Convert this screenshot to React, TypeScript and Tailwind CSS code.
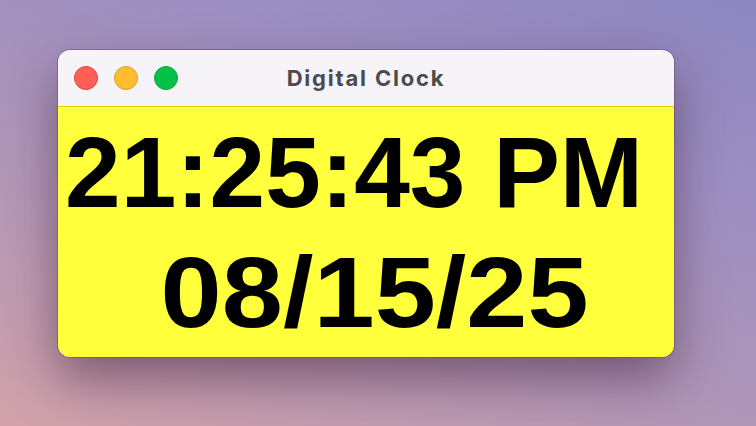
export default function App() {
  return (
    <div
      className="w-[756px] h-[426px] overflow-hidden pl-[58px] pt-[50px] bg-[linear-gradient(200deg,#8c86bf_0%,#9d8fc2_30%,#b297b6_65%,#d2a2aa_100%)]"
      style={{ fontFamily: '"Liberation Sans", Arial, sans-serif' }}
    >
      <div className="w-[616px] h-[307px] rounded-[12px] overflow-hidden flex flex-col shadow-[0_22px_50px_rgba(70,35,60,0.55),0_0_0_1px_rgba(80,60,90,0.35)]">
        {/* title bar */}
        <div className="relative h-[57px] bg-[#f6f4f8] flex items-center pl-[16px] gap-[16px] border-b border-[#e2d200]">
          <span className="w-[24px] h-[24px] rounded-full bg-[#ff5f57] border border-[#e0443e]" />
          <span className="w-[24px] h-[24px] rounded-full bg-[#febc2e] border border-[#dea123]" />
          <span className="w-[24px] h-[24px] rounded-full bg-[#05c148] border border-[#0aa83c]" />
          <div
            className="absolute inset-0 flex items-center justify-center text-[22px] font-bold text-[#4b4a4d] tracking-[1.8px] pointer-events-none"
            style={{ fontFamily: 'Inter, "Liberation Sans", sans-serif' }}
          >
            Digital Clock
          </div>
        </div>
        {/* clock body */}
        <div className="flex-1 bg-[#ffff3b] flex flex-col items-center pt-[15px] gap-[20px] text-black font-bold">
          <div className="text-[100px] leading-[100px] whitespace-pre w-full text-center pl-[4px]">21:25:43 PM </div>
          <div className="text-[100px] leading-[100px] whitespace-pre w-full text-center pl-[17px]">
            <span className="inline-block scale-x-110">08/15/25</span>
          </div>
        </div>
      </div>
    </div>
  );
}
